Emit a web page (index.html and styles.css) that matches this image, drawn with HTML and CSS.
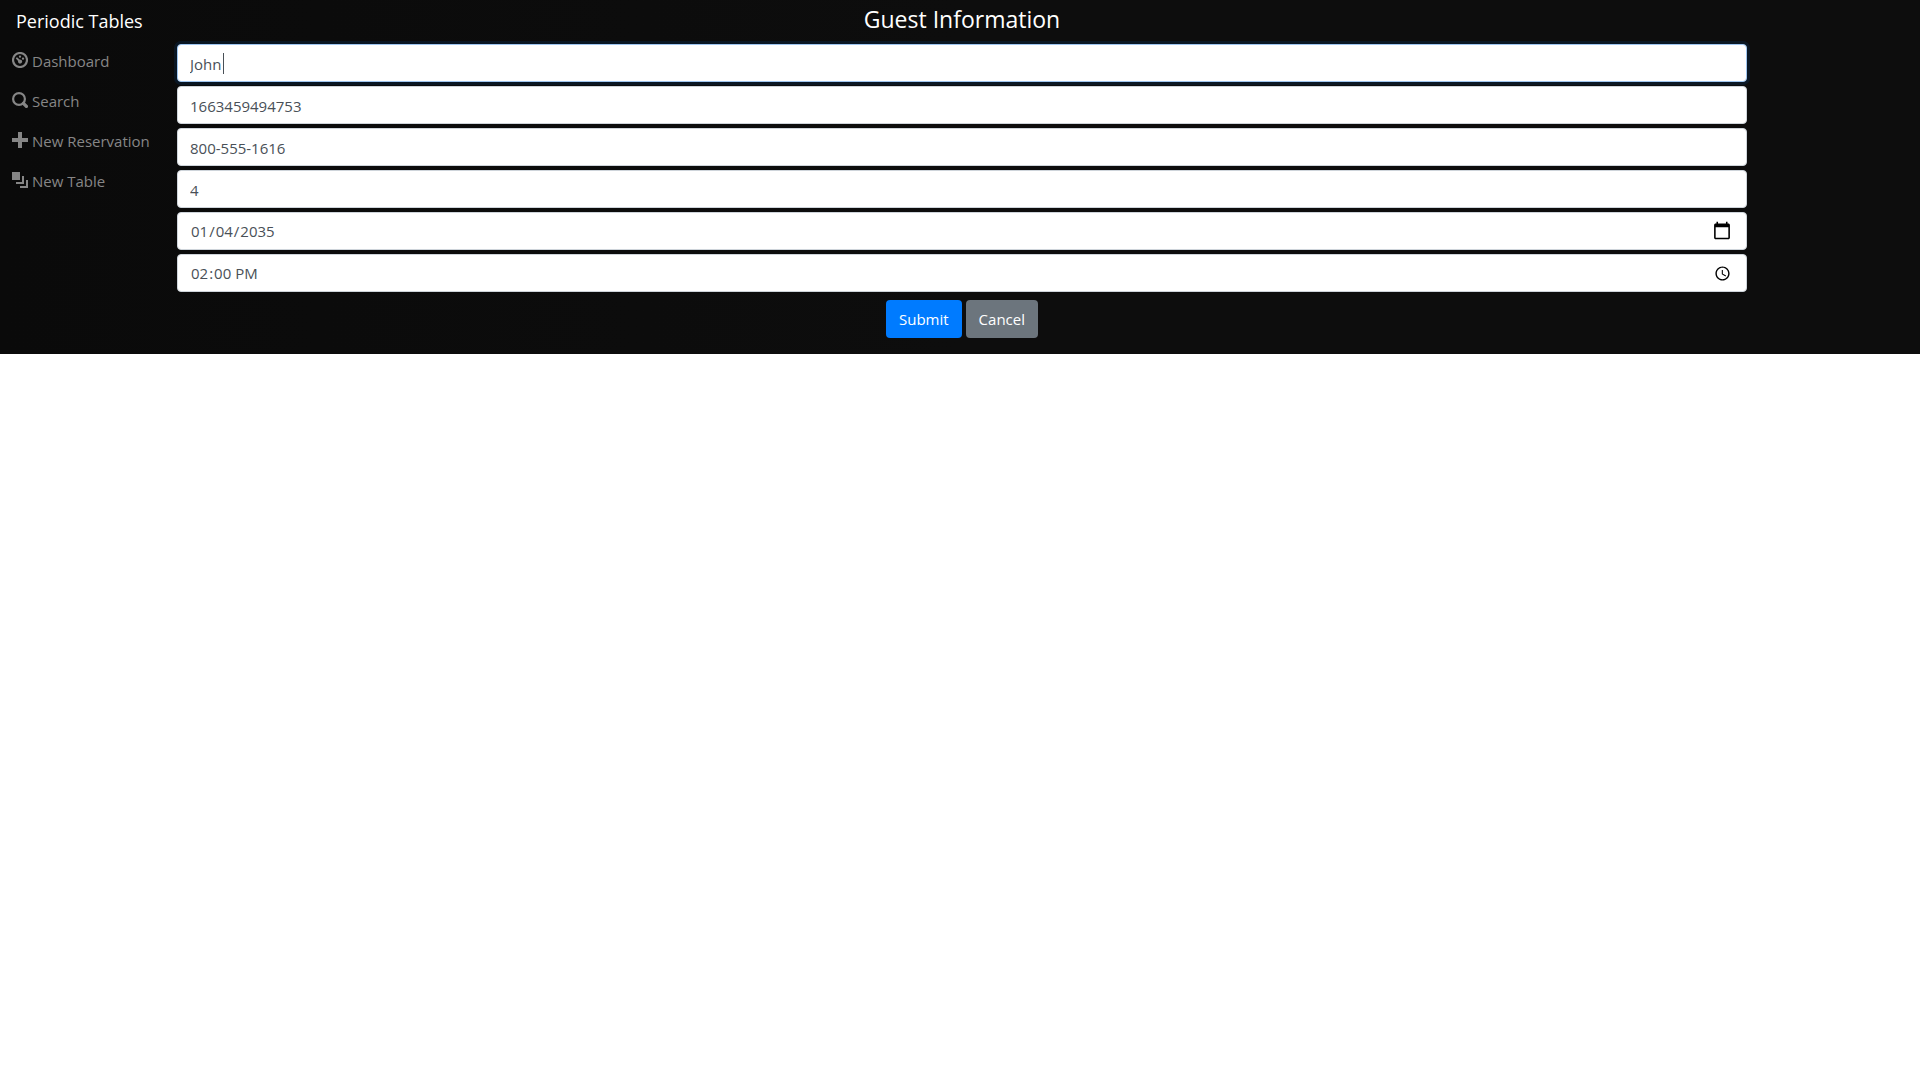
FILE: index.html
```html
<!DOCTYPE html>
<html lang="en">
<head>
<meta charset="utf-8">
<title>Periodic Tables</title>
<link rel="stylesheet" href="styles.css">
</head>
<body>
<div class="app">
  <nav class="sidebar">
    <a class="brand" href="#">Periodic Tables</a>
    <ul class="menu">
      <li><a class="menu-link" href="#"><svg class="icon" viewBox="0 0 8 8" aria-hidden="true"><circle class="ring" cx="4" cy="4" r="3.500"/><path d="M4 1.700a.6.6 0 1 0 0 1.200.6.6 0 1 0 0-1.200zM2.300 2.700a.5.5 0 0 0-.15.84l.91.91c-.020.080-.060.160-.060.250 0 .6.45 1.100 1 1.100s1.100-.5 1.100-1.100-.5-1-1.100-1l-.25.060-.91-.91a.5.5 0 0 0-.54-.15zM5.500 2.700a.6.6 0 1 0 0 1.200.6.6 0 1 0 0-1.200z"/></svg>Dashboard</a></li>
      <li><a class="menu-link" href="#"><svg class="icon" viewBox="0 0 8 8" aria-hidden="true"><circle class="ring" cx="3.500" cy="3.500" r="2.950"/><path class="handle" d="M5.700 5.700L7.200 7.200"/></svg>Search</a></li>
      <li><a class="menu-link" href="#"><svg class="icon" viewBox="0 0 8 8" aria-hidden="true"><path d="M3 0v3h-3v2h3v3h2v-3h3v-2h-3v-3h-2z"/></svg>New Reservation</a></li>
      <li><a class="menu-link" href="#"><svg class="icon" viewBox="0 0 8 8" aria-hidden="true"><path d="M0 0v4h4v-4h-4zm5 2v3h-3v1h4v-4h-1zm2 2v3h-3v1h4v-4h-1z"/></svg>New Table</a></li>
    </ul>
  </nav>
  <main class="content">
    <h1 class="title">Guest Information</h1>
    <form class="form">
      <div class="field focused"><input class="control" type="text" aria-label="First name" value="John"></div>
      <div class="field"><input class="control" type="text" aria-label="Last name" value="1663459494753"></div>
      <div class="field"><input class="control" type="tel" aria-label="Mobile number" value="800-555-1616"></div>
      <div class="field"><input class="control" type="text" inputmode="numeric" aria-label="Party size" value="4"></div>
      <div class="field"><input class="control picker date" type="date" aria-label="Reservation date" value="2035-01-04"></div>
      <div class="field"><input class="control picker time" type="time" aria-label="Reservation time" value="14:00"></div>
      <div class="actions">
        <button class="btn primary" type="submit">Submit</button>
        <button class="btn secondary" type="button">Cancel</button>
      </div>
    </form>
  </main>
</div>
</body>
</html>
```
FILE: styles.css
```css
*, *::before, *::after { box-sizing: border-box; }

body {
  margin: 0;
  background: #fff;
  font-family: "Open Sans", "Noto Sans", sans-serif;
  font-size: 15px;
  line-height: 24px;
}

.app {
  display: flex;
  background: linear-gradient(90deg, #0a0a0a, #0d0d0d 50%);
}

.sidebar {
  flex: 0 0 177px;
  padding-left: 12px;
}

.brand {
  display: block;
  padding: 6px 4px 5px;
  color: #fff;
  font-size: 18px;
  line-height: 30px;
  text-decoration: none;
}

.menu {
  margin: 0;
  padding: 0;
  list-style: none;
}

.menu-link {
  display: flex;
  align-items: center;
  gap: 4px;
  height: 40px;
  color: #868686;
  text-decoration: none;
}

.icon {
  width: 16px;
  height: 16px;
  margin-bottom: 2px;
  fill: currentColor;
}

.ring {
  fill: none;
  stroke: currentColor;
  stroke-width: 1.1;
}

.handle {
  fill: none;
  stroke: currentColor;
  stroke-width: 1.7;
  stroke-linecap: round;
}

.content {
  flex: 1;
  padding: 0 173px 16px 0;
}

.title {
  margin: 0;
  padding: 3px 0 9px;
  color: #fff;
  font-size: 23px;
  font-weight: 400;
  line-height: 32px;
  text-align: center;
}

.form {
  display: flex;
  flex-direction: column;
  gap: 4px;
}

.field { position: relative; }

.control {
  display: block;
  width: 100%;
  height: 38px;
  padding: 7px 12px 5px;
  border: 1px solid #ced4da;
  border-radius: 4px;
  background: #fff;
  color: #495057;
  font: inherit;
}

.picker { padding: 6px 12px; }

.picker::-webkit-calendar-picker-indicator { padding: 0; }

.date::-webkit-calendar-picker-indicator {
  width: 20px;
  height: 20px;
  margin-right: 2px;
}

.time::-webkit-calendar-picker-indicator {
  width: 17px;
  height: 17px;
  margin-right: 3px;
}

.focused .control {
  border-color: #9ec5f0;
  box-shadow: 0 0 0 3px rgba(0, 123, 255, 0.1);
}

/* text cursor at the end of the active value */
.focused::after {
  content: "";
  position: absolute;
  top: 9px;
  left: 46px;
  width: 1px;
  height: 21px;
  background: #495057;
}

.actions {
  display: flex;
  justify-content: center;
  gap: 4px;
  padding-top: 4px;
}

.btn {
  height: 38px;
  padding: 0 13px;
  border: 0;
  border-radius: 4px;
  color: #fff;
  font: inherit;
}

.primary { background: #007bff; }
.secondary { background: #6c757d; }
```
